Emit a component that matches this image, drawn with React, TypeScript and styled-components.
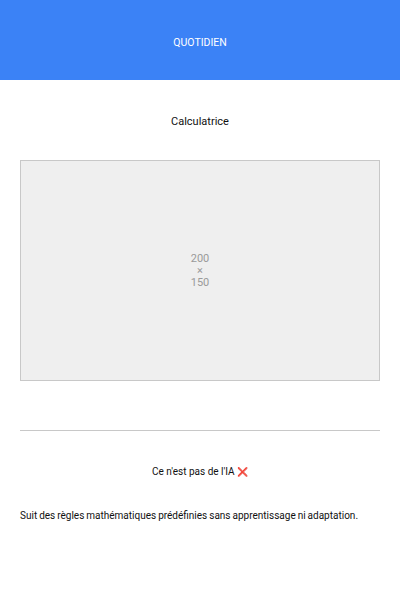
import React from "react";
import styled, { createGlobalStyle } from "styled-components";

const Global = createGlobalStyle`
  html, body { margin: 0; padding: 0; background: #ffffff; }
  body { font-family: Roboto, "Liberation Sans", sans-serif; color: #111; }
`;

const Header = styled.header`
  height: 80px;
  background: #3b82f6;
  color: #ffffff;
  display: flex;
  align-items: center;
  justify-content: center;
  font-size: 10.5px;
  padding-top: 4px;
  box-sizing: border-box;
`;

const Main = styled.main`
  padding: 0 20px;
  display: flex;
  flex-direction: column;
`;

const Title = styled.h1`
  margin: 34px 0 0;
  height: 16px;
  line-height: 16px;
  font-size: 11px;
  font-weight: 400;
  text-align: center;
`;

const Placeholder = styled.div`
  margin-top: 30px;
  height: 221px;
  box-sizing: border-box;
  background: #efefef;
  border: 1px solid #c8c8c8;
  display: flex;
  flex-direction: column;
  align-items: center;
  justify-content: center;
  color: #9a9a9a;
  font-size: 11px;
  line-height: 12px;
  padding-top: 1px;
`;

const Rule = styled.hr`
  margin: 49px 0 0;
  border: 0;
  border-top: 1px solid #c8c8c8;
  height: 0;
`;

const Subtitle = styled.h2`
  margin: 33px 0 0;
  font-size: 10px;
  line-height: 16px;
  font-weight: 400;
  text-align: center;
`;

const Mark = styled.span`
  font-size: 9px;
`;

const Text = styled.p`
  margin: 28px 0 0;
  font-size: 10px;
  line-height: 16px;
  word-spacing: -0.5px;
  white-space: nowrap;
`;

export default function App() {
  return (
    <>
      <Global />
      <Header>QUOTIDIEN</Header>
      <Main>
        <Title>Calculatrice</Title>
        <Placeholder>
          <span>200</span>
          <span>×</span>
          <span>150</span>
        </Placeholder>
        <Rule />
        <Subtitle>
          Ce n'est pas de l'IA <Mark>❌</Mark>
        </Subtitle>
        <Text>Suit des règles mathématiques prédéfinies sans apprentissage ni adaptation.</Text>
      </Main>
    </>
  );
}
